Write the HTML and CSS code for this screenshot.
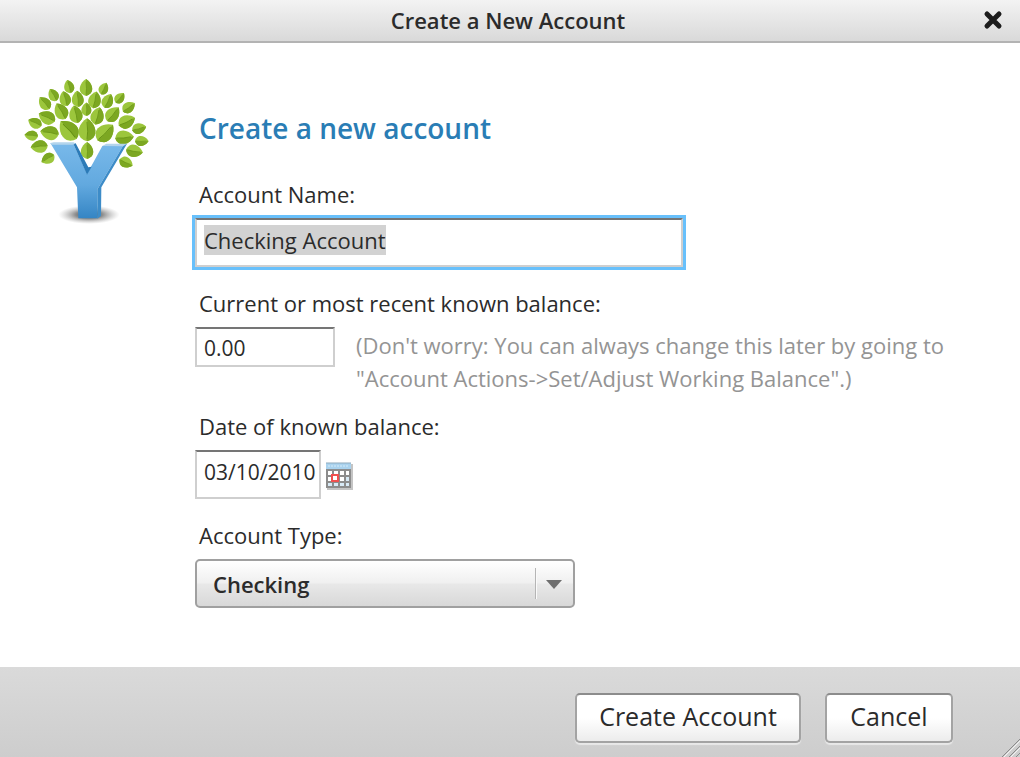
FILE: index.html
```html
<!DOCTYPE html>
<html lang="en">
<head>
    <meta charset="UTF-8">
    <meta name="viewport" content="width=device-width, initial-scale=1.0">
    <title>Create a New Account</title>
    <link rel="stylesheet" href="styles.css">
</head>
<body>

<header class="titlebar">
    <span class="titlebar-text">Create a New Account</span>
    <button type="button" class="close" aria-label="Close">
        <svg width="20" height="20" viewBox="0 0 20 20"><path d="M4 4 L16 16 M16 4 L4 16" stroke="#1c1c1c" stroke-width="5" stroke-linecap="round"/></svg>
    </button>
</header>

<form class="dialog" id="account-form">
    <div class="content">
        <svg class="logo" viewBox="0 0 435 480" aria-hidden="true">
            <defs>
                <linearGradient id="blue" x1="0" y1="0" x2="0" y2="1">
                    <stop offset="0" stop-color="#79b9ea"/>
                    <stop offset="0.55" stop-color="#62a9df"/>
                    <stop offset="1" stop-color="#3585c4"/>
                </linearGradient>
                <radialGradient id="shadow">
                    <stop offset="0" stop-color="#222" stop-opacity="0.95"/>
                    <stop offset="0.45" stop-color="#555" stop-opacity="0.65"/>
                    <stop offset="1" stop-color="#999" stop-opacity="0"/>
                </radialGradient>
                <g id="leaf">
                    <path d="M0 -26 C18 -15 24 6 14 17 Q7 24 0 25 Q-7 24 -14 17 C-24 6 -18 -15 0 -26Z" fill="#9cc63c"/>
                    <path d="M0 -26 C18 -15 24 6 14 17 Q7 24 0 25 Q4 0 0 -26Z" fill="#7ca722"/>
                    <path d="M0 -18 Q3 4 0 21" fill="none" stroke="#638f13" stroke-width="2"/>
                </g>
            </defs>
            <use href="#leaf" transform="translate(162 50) rotate(-15) scale(.8)"/>
            <use href="#leaf" transform="translate(213 53)"/>
            <use href="#leaf" transform="translate(266 56) rotate(25) scale(.75)"/>
            <use href="#leaf" transform="translate(115 75) rotate(-30) scale(.8)"/>
            <use href="#leaf" transform="translate(150 86) rotate(-15) scale(.9)"/>
            <use href="#leaf" transform="translate(188 87) rotate(-5) scale(.95)"/>
            <use href="#leaf" transform="translate(239 90) rotate(12)"/>
            <use href="#leaf" transform="translate(278 93) rotate(25) scale(.9)"/>
            <use href="#leaf" transform="translate(314 84) rotate(40) scale(.75)"/>
            <use href="#leaf" transform="translate(89 100) rotate(-40) scale(.9)"/>
            <use href="#leaf" transform="translate(341 112) rotate(55) scale(.85)"/>
            <use href="#leaf" transform="translate(138 124) rotate(-30) scale(1.05)"/>
            <use href="#leaf" transform="translate(182 133) rotate(-12) scale(1.05)"/>
            <use href="#leaf" transform="translate(214 118) scale(.8)"/>
            <use href="#leaf" transform="translate(247 138) rotate(15) scale(1.05)"/>
            <use href="#leaf" transform="translate(293 133) rotate(40) scale(1.05)"/>
            <use href="#leaf" transform="translate(335 155) rotate(65) scale(1.05)"/>
            <use href="#leaf" transform="translate(96 143) rotate(-65) scale(1.05)"/>
            <use href="#leaf" transform="translate(60 159) rotate(-65) scale(.85)"/>
            <use href="#leaf" transform="translate(161 181) rotate(-42) scale(1.4)"/>
            <use href="#leaf" transform="translate(216 180) scale(1.35)"/>
            <use href="#leaf" transform="translate(270 188) rotate(45) scale(1.3)"/>
            <use href="#leaf" transform="translate(49 197) rotate(-85) scale(.8)"/>
            <use href="#leaf" transform="translate(104 189) rotate(-80) scale(1.1)"/>
            <use href="#leaf" transform="translate(372 175) rotate(75) scale(.85)"/>
            <use href="#leaf" transform="translate(328 202) rotate(85) scale(1.1)"/>
            <use href="#leaf" transform="translate(380 213) rotate(90) scale(.8)"/>
            <use href="#leaf" transform="translate(73 230) rotate(-95)"/>
            <use href="#leaf" transform="translate(358 243) rotate(100)"/>
            <use href="#leaf" transform="translate(99 266) rotate(-120) scale(.85)"/>
            <use href="#leaf" transform="translate(333 277) rotate(115) scale(.85)"/>
            <use href="#leaf" transform="translate(216 242)"/>
            <ellipse cx="222" cy="434" rx="92" ry="28" fill="url(#shadow)"/>
            <path d="M106 219 L174 219 L216 312 L262 228 L327 223 L247 358 L247 445 L190 445 L186 352Z" fill="url(#blue)"/>
            <path d="M174 219 L182 220 L220 292 L230 290 L216 314Z" fill="#2c7bb8"/>
            <path d="M327 223 L336 221 L259 352 L258 438 L247 446 L247 358Z" fill="#3d8cc8"/>
            <path d="M106 219 L116 217 L176 217 L182 221 L172 224 L110 224Z M262 228 L274 221 L336 221 L324 229Z" fill="#b3d4ec"/>
        </svg>

        <div class="fields">
            <h1 class="heading">Create a new account</h1>

            <div class="field">
                <label for="account-name">Account Name:</label>
                <input type="text" id="account-name" class="text-input name-input" value="Checking Account">
            </div>

            <div class="field field-balance">
                <label for="balance">Current or most recent known balance:</label>
                <div class="row">
                    <input type="text" id="balance" class="text-input balance-input" value="0.00">
                    <p class="hint">(Don't worry: You can always change this later by going to<br>"Account Actions-&gt;Set/Adjust Working Balance".)</p>
                </div>
            </div>

            <div class="field">
                <label for="balance-date">Date of known balance:</label>
                <div class="row row-date">
                    <input type="text" id="balance-date" class="text-input date-input" value="03/10/2010">
                    <button type="button" class="calendar" aria-label="Choose date">
                        <svg width="28" height="28" viewBox="0 0 28 28">
                            <path d="M2 2 H28 V28 H2Z" fill="#c4c4c4"/>
                            <path d="M1 1 H26 V26 H1Z" fill="#8c8c8c"/>
                            <path d="M1 1 H26 V7 H1Z" fill="#a9d2ee"/>
                            <path d="M1 1 H26" stroke="#8fa9bb"/>
                            <path d="M3 4 H24" stroke="#d5ebf8" stroke-dasharray="2 1"/>
                            <path d="M3 9h4v4h-4z M9 9h4v4h-4z M15 9h4v4h-4z M21 9h3v4h-3z M3 15h4v4h-4z M15 15h4v4h-4z" fill="#fff"/>
                            <path d="M21 15h3v4h-3z M3 21h4v3h-4z M9 21h4v3h-4z M15 21h4v3h-4z M21 21h3v3h-3z" fill="#d8eaf6"/>
                            <path d="M7 13h6v6h-6z" fill="#fff" stroke="#f0504f" stroke-width="2"/>
                        </svg>
                    </button>
                </div>
            </div>

            <div class="field">
                <label for="account-type">Account Type:</label>
                <div class="select-wrap">
                    <select id="account-type" class="select">
                        <option>Checking</option>
                        <option>Savings</option>
                        <option>Credit Card</option>
                        <option>Cash</option>
                    </select>
                </div>
            </div>
        </div>
    </div>

    <footer class="footer">
        <button type="submit" class="btn btn-create">Create Account</button>
        <button type="button" class="btn btn-cancel">Cancel</button>
        <svg class="grip" width="20" height="20" viewBox="0 0 20 20" aria-hidden="true">
            <path d="M2 20 L20 2 M9 20 L20 9 M16 20 L20 16" stroke="#8a8a8a" stroke-width="1"/>
            <path d="M4 20 L20 4 M11 20 L20 11" stroke="#f2f2f2" stroke-width="1"/>
        </svg>
    </footer>
</form>

<script>
    // Start with the account name selected so it can be typed over
    var nameInput = document.getElementById('account-name');
    nameInput.focus();
    nameInput.select();

    document.getElementById('account-form').addEventListener('submit', function(event) {
        event.preventDefault();
    });
</script>

</body>
</html>
```
FILE: styles.css
```css
* {
    box-sizing: border-box;
}
body {
    margin: 0;
    min-height: 100vh;
    display: flex;
    flex-direction: column;
    background-color: #fff;
    color: #2b2b2b;
    font-family: "Open Sans", "Noto Sans", sans-serif;
    font-size: 22px;
}
input, select, button {
    font-family: inherit;
    color: inherit;
}

/* Title bar */
.titlebar {
    display: flex;
    align-items: center;
    height: 43px;
    padding: 0 17px 2px 33px;
    background: linear-gradient(#f3f3f3, #d9d9d9);
    border-bottom: 2px solid #b3b3b3;
}
.titlebar-text {
    flex: 1;
    text-align: center;
    font-weight: 600;
}
.close {
    display: flex;
    padding: 0;
    border: 0;
    background: none;
    cursor: pointer;
}

/* Dialog body */
.dialog {
    flex: 1;
    display: flex;
    flex-direction: column;
}
.content {
    flex: 1;
    display: flex;
    align-items: flex-start;
    gap: 35px;
    padding: 27px 12px 24px 15px;
}
.logo {
    width: 145px;
    height: 160px;
    flex: none;
}
.fields {
    flex: 1;
    padding-top: 40px;
}
.heading {
    margin: 0 0 34px 4px;
    font-size: 28px;
    line-height: 36px;
    font-weight: 600;
    color: #2a7db5;
}
.field {
    margin-bottom: 22px;
}
.field-balance {
    margin-bottom: 17px;
}
.field:last-child {
    margin-bottom: 0;
}
label {
    display: block;
    margin: 0 0 10px 4px;
    line-height: 28px;
}
.row {
    display: flex;
    align-items: flex-start;
    gap: 21px;
}
.row-date {
    gap: 4px;
}

.text-input {
    display: block;
    height: 49px;
    padding: 0 7px 6px;
    border: 2px solid #cfcfcf;
    border-top-color: #757575;
    border-radius: 0;
    background-color: #fff;
    font-size: 22px;
    line-height: 28px;
}
.text-input:focus {
    outline: 3px solid #68c0fb;
}
.text-input::selection {
    background-color: #d2d2d2;
    color: #2b2b2b;
}
.name-input {
    width: 60%;
    min-width: 280px;
}
.balance-input {
    width: 140px;
    height: 40px;
    padding: 2px 7px 0;
    font-size: 21px;
}
.date-input {
    width: 126px;
    padding-right: 0;
    font-size: 21px;
}
.hint {
    flex: 1;
    margin: 2px 0 0;
    line-height: 33px;
    color: #949494;
}
.calendar {
    display: flex;
    margin-top: 12px;
    padding: 0;
    border: 0;
    background: none;
    cursor: pointer;
}

/* Drop-down */
.select-wrap {
    position: relative;
    width: 380px;
}
.select {
    display: block;
    width: 100%;
    height: 49px;
    padding: 0 56px 0 16px;
    appearance: none;
    border: 2px solid #a0a0a0;
    border-radius: 5px;
    background: linear-gradient(#fff, #f0f0f0 48%, #e8e8e8 52%, #d8d8d8);
    font-size: 22px;
    font-weight: 600;
}
.select-wrap::before {
    content: "";
    position: absolute;
    top: 9px;
    right: 38px;
    width: 2px;
    height: 31px;
    background: linear-gradient(90deg, #b5b5b5 50%, #fafafa 50%);
    pointer-events: none;
}
.select-wrap::after {
    content: "";
    position: absolute;
    top: 21px;
    right: 13px;
    border: 8px solid transparent;
    border-top: 9px solid #6e6e6e;
    border-bottom: 0;
    pointer-events: none;
}

/* Footer */
.footer {
    position: relative;
    display: flex;
    justify-content: flex-end;
    gap: 24px;
    height: 90px;
    padding: 26px 67px 0 20px;
    background: linear-gradient(#dadada, #cdcdcd);
}
.btn {
    height: 50px;
    padding: 0 0 4px;
    border: 2px solid #a3a3a3;
    border-top-color: #8c8c8c;
    border-radius: 5px;
    background: linear-gradient(#fff 50%, #ececec);
    box-shadow: 0 2px 1px #e8e8e8;
    font-size: 25px;
    cursor: pointer;
}
.btn-create {
    width: 226px;
}
.btn-cancel {
    width: 128px;
}
.grip {
    position: absolute;
    right: 0;
    bottom: 0;
}
```
